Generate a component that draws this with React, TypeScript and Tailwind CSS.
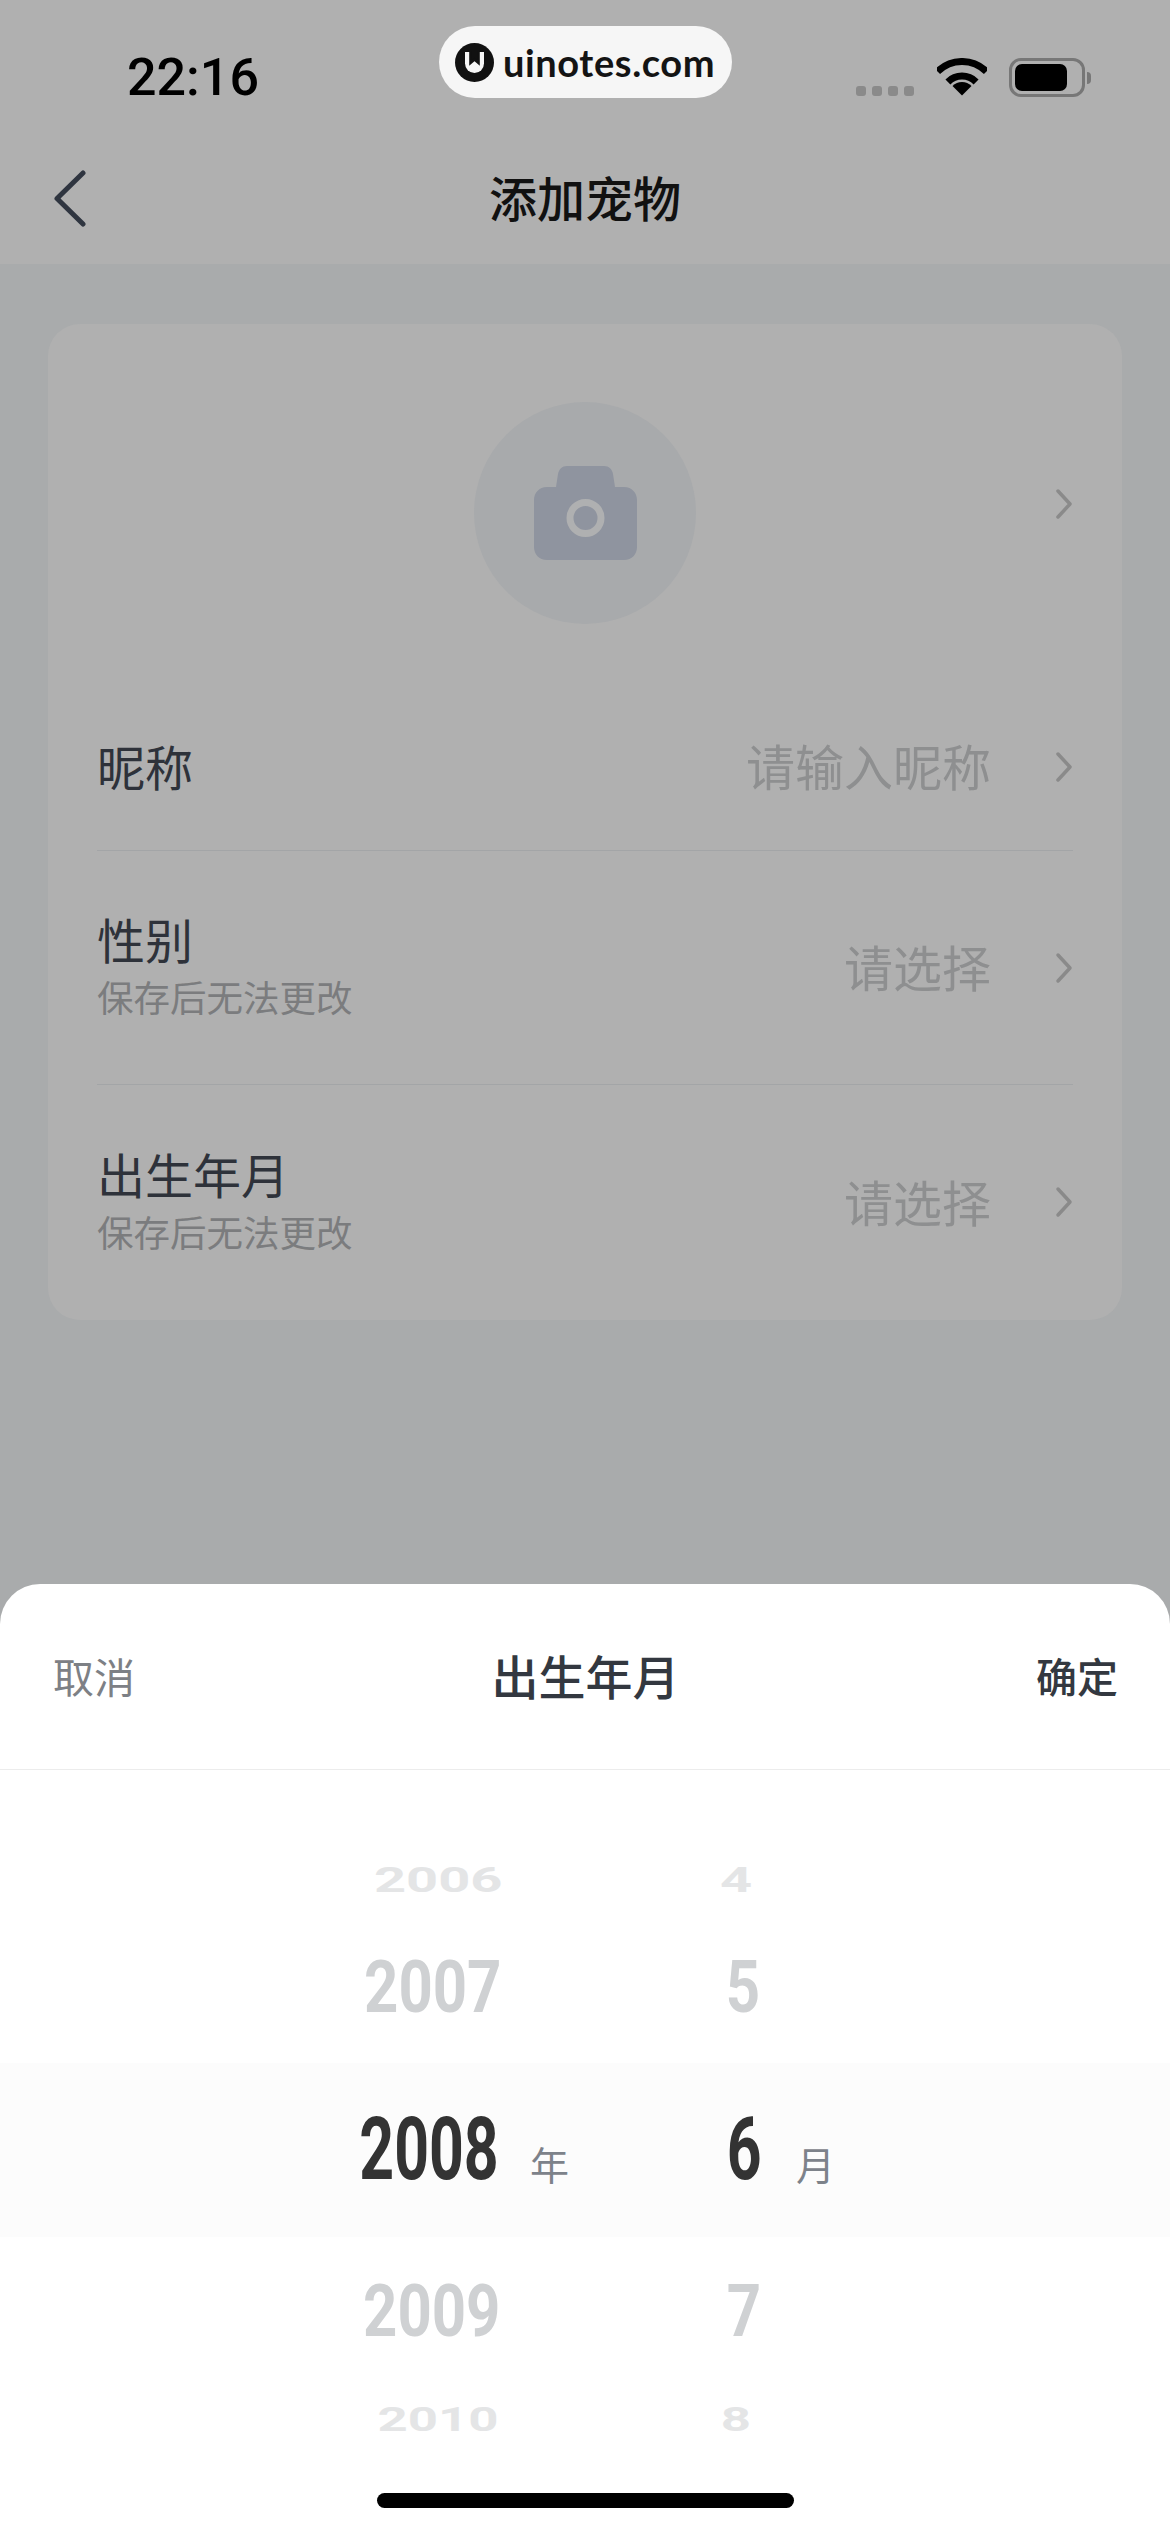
const FIELD_ROWS = [
  { label: '昵称', value: '请输入昵称', className: 'h-[168px] border-b border-[#a3a5a7]' },
  { label: '性别', hint: '保存后无法更改', value: '请选择', className: 'h-[234px] border-b border-[#a3a5a7]' },
  { label: '出生年月', hint: '保存后无法更改', value: '请选择', className: 'h-[234px]' },
]

const WHEEL_ROWS = [
  { year: '2006', month: '4', rowClass: 'h-[108px] pl-[338px]', monthClass: 'ml-[168px]', textClass: 'text-[35px] leading-none font-bold text-[#e4e5e6] scale-x-[1.6]' },
  { year: '2007', month: '5', rowClass: 'h-[106px] pl-[333px]', monthClass: 'ml-[180px]', textClass: 'text-[73px] leading-none font-bold text-[#cfd1d3] scale-x-[0.82]' },
]

const WHEEL_ROWS_BELOW = [
  { year: '2009', month: '7', rowClass: 'h-[106px] pl-[332px]', monthClass: 'ml-[182px]', textClass: 'text-[73px] leading-none font-bold text-[#cfd1d3] scale-x-[0.82]' },
  { year: '2010', month: '8', rowClass: 'h-[110px] pl-[338px]', monthClass: 'ml-[168px]', textClass: 'text-[34px] leading-none font-bold text-[#e4e5e6] scale-x-[1.55]' },
]

function Chevron() {
  return (
    <svg width="18" height="32" viewBox="0 0 18 32" fill="none" className="shrink-0">
      <path d="M3 3 L15 16 L3 29" stroke="#8a8a8a" strokeWidth="3.5" strokeLinecap="round" strokeLinejoin="round" />
    </svg>
  )
}

function Wifi() {
  return (
    <svg width="50" height="38" viewBox="0 0 50 38" fill="none">
      <path d="M0.6 13.6 A34.5 34.5 0 0 1 49.4 13.6" stroke="black" strokeWidth="7" />
      <path d="M10.9 23.9 A20 20 0 0 1 39.1 23.9" stroke="black" strokeWidth="7" />
      <path d="M25 37.5 L15.5 28 A13.5 13.5 0 0 1 34.5 28 Z" fill="black" />
    </svg>
  )
}

function Logo() {
  return (
    <svg width="39" height="39" viewBox="0 0 39 39" className="shrink-0">
      <circle cx="19.5" cy="19.5" r="19.5" fill="#111" />
      <path d="M10 9 H29 V20.5 A9.5 9.5 0 0 1 10 20.5 Z" fill="#f6f6f6" />
      <path d="M15.5 8 V20 L19.5 16.5 L23.5 20 V8" stroke="#111" strokeWidth="2.6" fill="#111" />
    </svg>
  )
}

function Camera() {
  return (
    <svg width="103" height="94" viewBox="0 0 103 94">
      <path
        d="M33 0 H70 C75 0 78 3 79 8 L81 21 H90 C98 21 103 27 103 34 V81 C103 88 98 94 90 94 H13 C5 94 0 88 0 81 V34 C0 27 5 21 13 21 H22 L24 8 C25 3 28 0 33 0 Z"
        fill="#8f949f"
      />
      <circle cx="51.5" cy="52" r="15.5" fill="none" stroke="#afb0b1" strokeWidth="7" />
    </svg>
  )
}

export default function App() {
  return (
    <div className="relative h-[2532px] w-[1170px] overflow-hidden bg-[#a9abac] font-['Noto_Sans_CJK_SC','Noto_Sans',sans-serif]">
      <header className="h-[264px] bg-[#b0b0b0]">
        <div className="flex h-[132px] items-start pl-[127px] pr-[79px] pt-[58px]">
          <span className="font-['Roboto',sans-serif] text-[52px] leading-[40px] font-medium text-black">22:16</span>
          <div className="ml-auto flex h-[39px] items-end">
            <div className="mb-[1px] flex gap-[6px]">
              <div className="h-[10px] w-[10px] rounded-[3px] bg-[#8a8a8a]" />
              <div className="h-[10px] w-[10px] rounded-[3px] bg-[#8a8a8a]" />
              <div className="h-[10px] w-[10px] rounded-[3px] bg-[#8a8a8a]" />
              <div className="h-[10px] w-[10px] rounded-[3px] bg-[#8a8a8a]" />
            </div>
            <div className="mb-[1px] ml-[23px]">
              <Wifi />
            </div>
            <div className="ml-[22px] flex h-[39px] w-[76px] items-center rounded-[12px] border-[3px] border-[#777777] pl-[3px]">
              <div className="h-[27px] w-[52px] rounded-[7px] bg-black" />
            </div>
            <div className="mb-[13px] ml-[2px] h-[12px] w-[4px] rounded-r-full bg-[#777777]" />
          </div>
        </div>
        <div className="relative flex h-[132px] items-center justify-center pb-[4px]">
          <svg width="32" height="57" viewBox="0 0 32 57" fill="none" className="absolute left-[54px] top-[38px]">
            <path d="M29 3 L3 28.5 L29 54" stroke="#2f3540" strokeWidth="5" strokeLinecap="round" strokeLinejoin="round" />
          </svg>
          <h1 className="text-[48px] font-medium text-[#111111]">添加宠物</h1>
        </div>
      </header>

      <div className="absolute left-[439px] top-[26px] flex h-[72px] w-[293px] items-center rounded-full bg-[#f6f6f6] pl-[16px]">
        <Logo />
        <span className="ml-[9px] font-['Lato',sans-serif] text-[38px] font-bold tracking-[0.6px] text-[#141414]">uinotes.com</span>
      </div>

      <main className="px-[48px] pt-[60px]">
        <div className="h-[996px] rounded-[32px] bg-[#b0b0b0] px-[49px]">
          <div className="grid h-[359px] grid-cols-[1fr_222px_1fr] items-start pt-[78px]">
            <div />
            <div className="flex h-[222px] w-[222px] items-center justify-center rounded-full bg-[#a8aaac]">
              <Camera />
            </div>
            <div className="flex h-[204px] items-center justify-end">
              <Chevron />
            </div>
          </div>
          {FIELD_ROWS.map((row) => (
            <div key={row.label} className={`flex items-center ${row.className}`}>
              <div className="flex flex-col pb-[3px]">
                <span className="text-[48px] leading-[62px] text-[#2e323a]">{row.label}</span>
                {row.hint && <span className="text-[36.5px] leading-[56px] text-[#7b7c7e]">{row.hint}</span>}
              </div>
              <span className="ml-auto mr-[64px] pb-[3px] text-[49px] text-[#8e8f90]">{row.value}</span>
              <Chevron />
            </div>
          ))}
        </div>
      </main>

      <section className="absolute inset-x-0 bottom-0 flex h-[948px] flex-col rounded-t-[40px] bg-white">
        <div className="grid h-[186px] shrink-0 grid-cols-3 items-center border-b border-[#ececec] pl-[53px] pr-[52px]">
          <span className="pb-[2px] text-[41px] text-[#7d8085]">取消</span>
          <span className="justify-self-center pb-[3px] text-[47px] font-medium text-[#333840]">出生年月</span>
          <span className="justify-self-end pb-[2px] text-[41px] font-medium text-[#333840]">确定</span>
        </div>

        <div className="h-[293px] shrink-0 pt-[56px] font-['Roboto',sans-serif]">
          {WHEEL_ROWS.map((row) => (
            <div key={row.year} className={`flex items-center ${row.rowClass}`}>
              <div className="flex w-[200px] justify-center">
                <span className={`inline-block ${row.textClass}`}>{row.year}</span>
              </div>
              <div className={`flex w-[60px] justify-center ${row.monthClass}`}>
                <span className={`inline-block ${row.textClass}`}>{row.month}</span>
              </div>
            </div>
          ))}
        </div>

        <div className="flex h-[174px] shrink-0 items-center bg-[#fcfcfc] pb-[3px] pl-[329px] font-['Roboto',sans-serif]">
          <div className="flex w-[200px] justify-center">
            <span className="inline-block scale-x-[0.69] text-[88px] leading-none font-bold text-[#333333]">2008</span>
          </div>
          <div className="ml-[185px] flex w-[60px] justify-center">
            <span className="inline-block scale-x-[0.69] text-[88px] leading-none font-bold text-[#333333]">6</span>
          </div>
        </div>

        <div className="shrink-0 pt-[21px] font-['Roboto',sans-serif]">
          {WHEEL_ROWS_BELOW.map((row) => (
            <div key={row.year} className={`flex items-center ${row.rowClass}`}>
              <div className="flex w-[200px] justify-center">
                <span className={`inline-block ${row.textClass}`}>{row.year}</span>
              </div>
              <div className={`flex w-[60px] justify-center ${row.monthClass}`}>
                <span className={`inline-block ${row.textClass}`}>{row.month}</span>
              </div>
            </div>
          ))}
        </div>

        <div className="mt-[19px] h-[15px] w-[417px] shrink-0 self-center rounded-full bg-black" />

        <span className="absolute left-[530px] top-[551px] text-[39px] leading-[56px] text-[#7d828a]">年</span>
        <span className="absolute left-[796px] top-[551px] text-[39px] leading-[56px] text-[#7d828a]">月</span>
      </section>
    </div>
  )
}
